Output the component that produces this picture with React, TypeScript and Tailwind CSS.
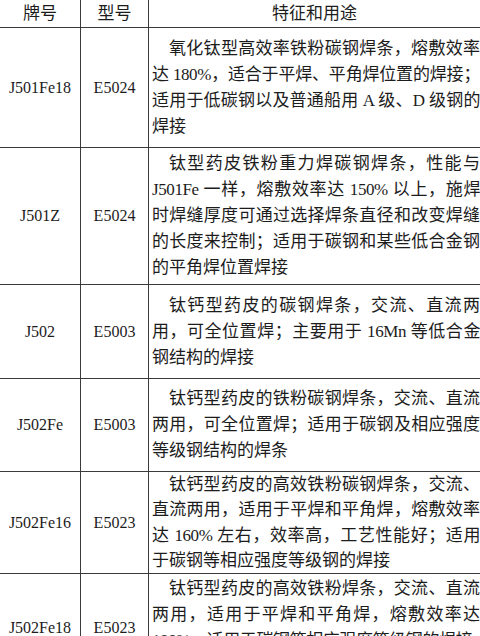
import React from "react";

const FONT = '"Liberation Serif", "Noto Sans CJK SC", serif';

type Row = { brand: string; model: string; h: string; top?: boolean; lines: string[] };

const rows: Row[] = [
  {
    brand: "J501Fe18",
    model: "E5024",
    h: "h-[120px]",
    lines: [
      "氧化钛型高效率铁粉碳钢焊条，熔敷效率",
      "达 180%，适合于平焊、平角焊位置的焊接；",
      "适用于低碳钢以及普通船用 A 级、D 级钢的",
      "焊接",
    ],
  },
  {
    brand: "J501Z",
    model: "E5024",
    h: "h-[137px]",
    lines: [
      "钛型药皮铁粉重力焊碳钢焊条，性能与",
      "J501Fe 一样，熔敷效率达 150% 以上，施焊",
      "时焊缝厚度可通过选择焊条直径和改变焊缝",
      "的长度来控制；适用于碳钢和某些低合金钢",
      "的平角焊位置焊接",
    ],
  },
  {
    brand: "J502",
    model: "E5003",
    h: "h-[94px]",
    lines: [
      "钛钙型药皮的碳钢焊条，交流、直流两",
      "用，可全位置焊；主要用于 16Mn 等低合金",
      "钢结构的焊接",
    ],
  },
  {
    brand: "J502Fe",
    model: "E5003",
    h: "h-[93px]",
    lines: [
      "钛钙型药皮的铁粉碳钢焊条，交流、直流",
      "两用，可全位置焊；适用于碳钢及相应强度",
      "等级钢结构的焊条",
    ],
  },
  {
    brand: "J502Fe16",
    model: "E5023",
    h: "h-[102px]",
    lines: [
      "钛钙型药皮的高效铁粉碳钢焊条，交流、",
      "直流两用，适用于平焊和平角焊，熔敷效率",
      "达 160% 左右，效率高，工艺性能好；适用",
      "于碳钢等相应强度等级钢的焊接",
    ],
  },
  {
    brand: "J502Fe18",
    model: "E5023",
    h: "h-[108px]",
    top: true,
    lines: [
      "钛钙型药皮的高效铁粉焊条，交流、直流",
      "两用，适用于平焊和平角焊，熔敷效率达",
      "180%，适用于碳钢等相应强度等级钢的焊接",
    ],
  },
];

export default function App() {
  return (
    <div
      lang="zh-CN"
      className="w-[480px] h-[636px] overflow-hidden bg-white text-[#1c1c1c]"
      style={{ fontFamily: FONT }}
    >
      <div className="flex h-[28px] border-b border-[#3a3a3a] text-[17px] leading-[26px]">
        <div className="w-[81px] flex items-center justify-center border-r border-[#3a3a3a]">牌号</div>
        <div className="w-[68px] flex items-center justify-center border-r border-[#3a3a3a]">型号</div>
        <div className="flex-1 flex items-center justify-center">特征和用途</div>
      </div>
      {rows.map((r, i) => (
        <div key={i} className={`flex border-b border-[#3a3a3a] ${r.h}`}>
          <div className="w-[81px] shrink-0 flex items-center justify-center border-r border-[#3a3a3a] text-[16px]">
            {r.brand}
          </div>
          <div className="w-[68px] shrink-0 flex items-center justify-center border-r border-[#3a3a3a] text-[16px]">
            {r.model}
          </div>
          <div
            className={`flex-1 min-w-0 flex flex-col pl-[3px] text-[17px] leading-[26px] ${
              r.top ? "justify-start pt-[2px]" : "justify-center"
            }`}
          >
            {r.lines.map((l, j) => {
              const last = j === r.lines.length - 1;
              const tight = l.length >= 21;
              return (
                <div
                  key={j}
                  className={`h-[26px] overflow-hidden ${j === 0 ? "pl-[17px]" : ""} ${
                    tight ? "tracking-[-0.4px]" : ""
                  } ${last ? "text-left" : "text-justify [text-align-last:justify]"}`}
                >
                  {l}
                </div>
              );
            })}
          </div>
        </div>
      ))}
    </div>
  );
}
